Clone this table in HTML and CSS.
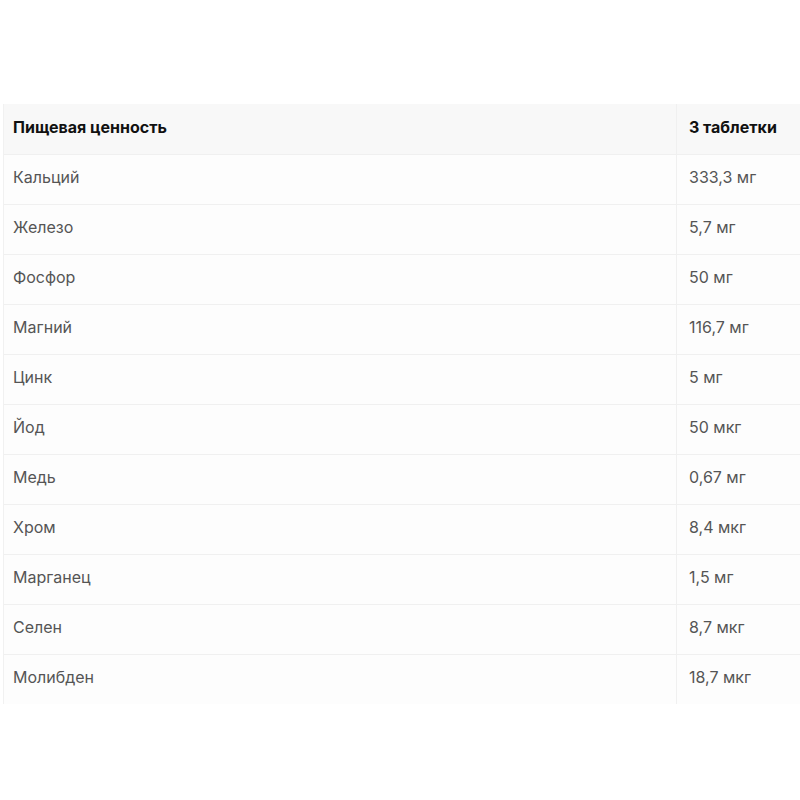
FILE: index.html
```html
<!DOCTYPE html>
<html lang="ru">
<head>
<meta charset="utf-8">
<link rel="stylesheet" href="styles.css">
</head>
<body>
<div class="page">
  <div class="table">
    <div class="row head"><div class="c1">Пищевая ценность</div><div class="c2">3 таблетки</div></div>
    <div class="row"><div class="c1">Кальций</div><div class="c2">333,3 мг</div></div>
    <div class="row"><div class="c1">Железо</div><div class="c2">5,7 мг</div></div>
    <div class="row"><div class="c1">Фосфор</div><div class="c2">50 мг</div></div>
    <div class="row"><div class="c1">Магний</div><div class="c2">116,7 мг</div></div>
    <div class="row"><div class="c1">Цинк</div><div class="c2">5 мг</div></div>
    <div class="row"><div class="c1">Йод</div><div class="c2">50 мкг</div></div>
    <div class="row"><div class="c1">Медь</div><div class="c2">0,67 мг</div></div>
    <div class="row"><div class="c1">Хром</div><div class="c2">8,4 мкг</div></div>
    <div class="row"><div class="c1">Марганец</div><div class="c2">1,5 мг</div></div>
    <div class="row"><div class="c1">Селен</div><div class="c2">8,7 мкг</div></div>
    <div class="row"><div class="c1">Молибден</div><div class="c2">18,7 мкг</div></div>
  </div>
</div>
</body>
</html>
```

FILE: styles.css
```css
html, body {
  margin: 0;
  padding: 0;
  background: #ffffff;
}
.page {
  width: 800px;
  height: 800px;
  padding: 104px 0 0 3px;
  box-sizing: border-box;
  font-family: Inter, "Noto Sans", sans-serif;
}
.table {
  border-left: 1px solid #f1f1f1;
}
.row {
  display: grid;
  grid-template-columns: 672px 1fr;
  height: 50px;
  border-top: 1px solid #f0f0f0;
  box-sizing: border-box;
  font-size: 16px;
  color: #555555;
}
.row .c1, .row .c2 {
  display: flex;
  align-items: center;
  padding-left: 9px;
  padding-bottom: 5px;
}
.row .c2 {
  border-left: 1px solid #f0f0f0;
  padding-left: 12px;
}
.row.head {
  background: #f8f8f8;
  border-top: none;
  color: #111111;
  font-weight: 700;
  font-size: 16px;
}
.row:not(.head) {
  background: #fdfdfd;
}
```
